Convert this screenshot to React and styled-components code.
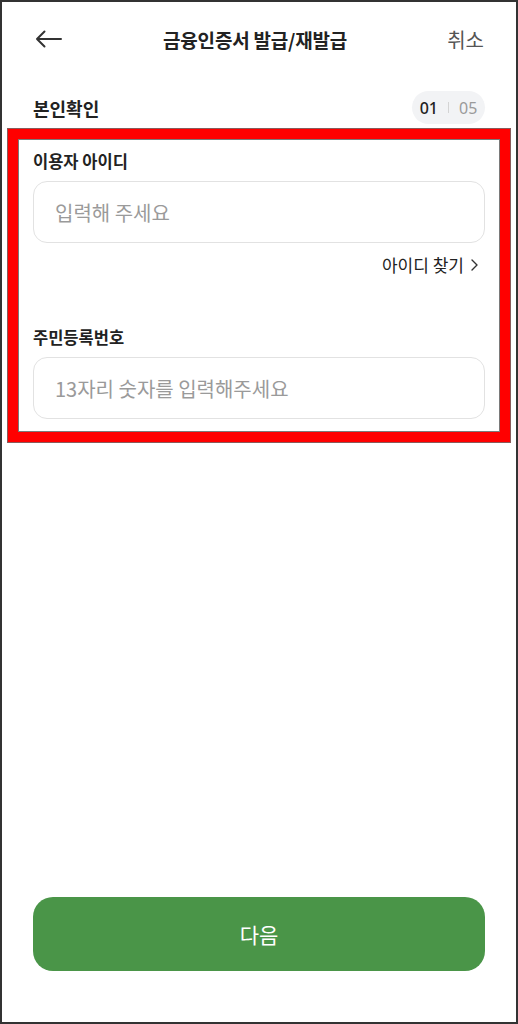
import React from "react";
import styled, { createGlobalStyle } from "styled-components";

const GlobalStyle = createGlobalStyle`
  html, body {
    margin: 0;
    padding: 0;
    background: #ffffff;
  }
  body {
    font-family: "Noto Sans CJK KR", "Noto Sans", sans-serif;
    color: #222222;
  }
  * {
    box-sizing: border-box;
  }
`;

const Page = styled.div`
  width: 518px;
  height: 1024px;
  border: 2px solid #333333;
  display: flex;
  flex-direction: column;
  background: #ffffff;
`;

const Header = styled.header`
  height: 74px;
  padding: 0 32px 0 33px;
  display: flex;
  align-items: center;
  justify-content: space-between;
`;

const BackButton = styled.button`
  width: 28px;
  height: 28px;
  padding: 0;
  border: none;
  background: none;
  display: flex;
  align-items: center;
  cursor: pointer;
`;

const HeaderTitle = styled.h1`
  margin: 0;
  font-size: 19px;
  font-weight: 700;
  color: #222222;
  letter-spacing: -0.2px;
`;

const CancelButton = styled.button`
  border: none;
  background: none;
  padding: 0;
  font-family: inherit;
  font-size: 20px;
  color: #555555;
  cursor: pointer;
`;

const TitleRow = styled.div`
  margin: 15px 31px 5px 31px;
  height: 33px;
  display: flex;
  align-items: center;
  justify-content: space-between;
`;

const SectionTitle = styled.h2`
  margin: 0;
  font-size: 18px;
  font-weight: 700;
  color: #222222;
`;

const StepBadge = styled.div`
  width: 73px;
  height: 33px;
  border-radius: 17px;
  background: #f2f3f5;
  display: flex;
  align-items: center;
  justify-content: center;
  gap: 10px;
  font-family: "Noto Sans", "Roboto", sans-serif;
  font-size: 16px;
`;

const StepNumber = styled.span`
  color: ${p => (p.current ? "#222222" : "#9a9a9a")};
  font-weight: ${p => (p.current ? 500 : 400)};
`;

const StepDivider = styled.span`
  width: 1px;
  height: 11px;
  background: #d4d4d4;
`;

const Highlight = styled.section`
  margin: 0 6px;
  border: 10px solid #ff0000;
  box-shadow: inset 0 0 0 1px #7a7a7a, 0 0 0 1px #8a5a5a;
  padding: 10px 15px 13px 15px;
  display: flex;
  flex-direction: column;
`;

const Field = styled.div`
  display: flex;
  flex-direction: column;
  margin-top: ${p => p.offset || 0}px;
`;

const Label = styled.label`
  font-size: 16.5px;
  line-height: 24px;
  font-weight: 700;
  color: #222222;
  margin-bottom: 8px;
`;

const Input = styled.input`
  height: 62px;
  width: 100%;
  border: 1px solid #e2e2e2;
  border-radius: 14px;
  padding: 0 21px;
  font-family: inherit;
  font-size: 20px;
  color: #222222;
  outline: none;
  background: #ffffff;

  &::placeholder {
    color: #9a9a9a;
  }
`;

const LinkRow = styled.div`
  margin-top: 10px;
  display: flex;
  justify-content: flex-end;
`;

const FindLink = styled.a`
  display: flex;
  align-items: center;
  gap: 7px;
  font-size: 17px;
  line-height: 24px;
  color: #222222;
  text-decoration: none;
  padding-right: 7px;
  cursor: pointer;
`;

const Spacer = styled.div`
  flex: 1;
`;

const NextButton = styled.button`
  margin: 0 31px 51px 31px;
  height: 74px;
  border: none;
  border-radius: 20px;
  background: #4a9548;
  color: #ffffff;
  font-family: inherit;
  font-size: 21px;
  font-weight: 400;
  cursor: pointer;
`;

function ArrowLeft() {
  return (
    <svg width="27" height="18" viewBox="0 0 27 18" fill="none">
      <path
        d="M26 9H2M9.5 1.5L2 9l7.5 7.5"
        stroke="#333333"
        strokeWidth="2"
        strokeLinecap="round"
        strokeLinejoin="round"
      />
    </svg>
  );
}

function ChevronRight() {
  return (
    <svg width="7" height="12" viewBox="0 0 7 12" fill="none">
      <path d="M1 1l5 5-5 5" stroke="#333333" strokeWidth="1.4" strokeLinecap="round" strokeLinejoin="round" />
    </svg>
  );
}

export default function App() {
  return (
    <>
      <GlobalStyle />
      <Page>
        <Header>
          <BackButton aria-label="뒤로가기">
            <ArrowLeft />
          </BackButton>
          <HeaderTitle>금융인증서 발급/재발급</HeaderTitle>
          <CancelButton>취소</CancelButton>
        </Header>

        <TitleRow>
          <SectionTitle>본인확인</SectionTitle>
          <StepBadge>
            <StepNumber current>01</StepNumber>
            <StepDivider />
            <StepNumber>05</StepNumber>
          </StepBadge>
        </TitleRow>

        <Highlight>
          <Field>
            <Label>이용자 아이디</Label>
            <Input placeholder="입력해 주세요" />
          </Field>
          <LinkRow>
            <FindLink>
              아이디 찾기
              <ChevronRight />
            </FindLink>
          </LinkRow>
          <Field offset={48}>
            <Label>주민등록번호</Label>
            <Input placeholder="13자리 숫자를 입력해주세요" />
          </Field>
        </Highlight>

        <Spacer />
        <NextButton>다음</NextButton>
      </Page>
    </>
  );
}
